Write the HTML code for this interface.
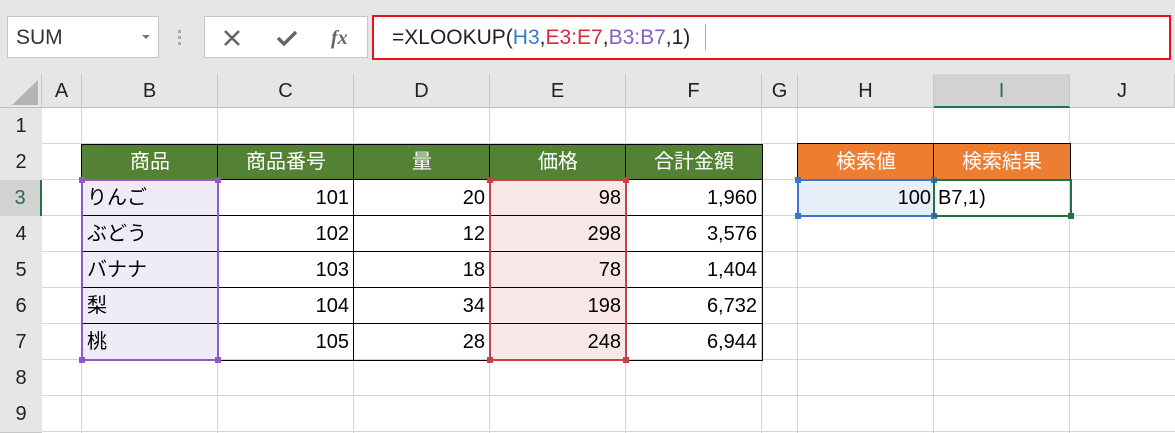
<!DOCTYPE html><html><head><meta charset="utf-8"><style>
*{margin:0;padding:0;box-sizing:border-box}
body{width:1175px;height:433px;background:#e6e6e6;position:relative;overflow:hidden;font-family:"Liberation Sans","Noto Sans CJK JP",sans-serif;color:#000}
.a{position:absolute}
.c{position:absolute;font-size:20px;line-height:36px;white-space:nowrap}
.r{text-align:right;padding-right:5px}
.l{padding-left:5px}
.ctr{text-align:center}
.vl{position:absolute;top:108px;height:325px;width:1px;background:#d4d4d4}
.hl{position:absolute;left:0;width:1175px;height:1px;background:#d4d4d4}
.hd{position:absolute;top:74px;height:34px;text-align:center;font-size:20px;line-height:34px;color:#222;border-right:1px solid #c8c8c8}
.rh{position:absolute;left:0;width:42px;text-align:center;font-size:20px;line-height:36px;color:#222;border-bottom:1px solid #c8c8c8;background:#e6e6e6}
.h{position:absolute;width:6px;height:6px}
</style></head><body>
<!-- formula bar -->
<div class="a" style="left:7px;top:16px;width:152px;height:42px;background:#fff;border:1px solid #c6c6c6"></div>
<div class="c" style="left:16px;top:20px;font-size:21px;color:#333">SUM</div>
<div class="a" style="left:142px;top:35px;border-left:4px solid transparent;border-right:4px solid transparent;border-top:4px solid #777"></div>
<div class="a" style="left:178px;top:30px;width:3px;height:3px;background:#aaa;box-shadow:0 6px #aaa,0 12px #aaa"></div>
<div class="a" style="left:204px;top:16px;width:164px;height:42px;background:#fff;border:1px solid #c6c6c6"></div>
<svg class="a" style="left:222px;top:28px" width="20" height="20"><path d="M3 3L17 17M17 3L3 17" stroke="#666" stroke-width="2.6"/></svg>
<svg class="a" style="left:275px;top:28px" width="24" height="20"><path d="M3 10L9 16L21 4" stroke="#666" stroke-width="3.4" fill="none"/></svg>
<div class="c" style="left:331px;top:20px;font-family:'Liberation Serif',serif;font-style:italic;font-weight:bold;color:#666;font-size:20px">fx</div>
<div class="a" style="left:372px;top:15px;width:799px;height:45px;background:#fff;border:2px solid #e8111a"></div>
<div class="c" style="left:392px;top:20px;font-size:21px;color:#222">=XLOOKUP(<span style="color:#3478d4">H3</span>,<span style="color:#d22b3c">E3:E7</span>,<span style="color:#8a5cc4">B3:B7</span>,1)</div>
<div class="a" style="left:705px;top:24px;width:1px;height:26px;background:#aaa"></div>
<!-- header row -->
<div class="a" style="left:0;top:74px;width:1175px;height:34px;background:#e6e6e6;border-bottom:1px solid #bdbdbd"></div>
<div class="a" style="left:0;top:74px;width:42px;height:34px;border-right:1px solid #c8c8c8"></div>
<svg class="a" style="left:10px;top:78px" width="30" height="28"><path d="M28 2L28 27L2 27Z" fill="#b4b4b4"/></svg>
<div class="hd" style="left:42px;width:40px">A</div>
<div class="hd" style="left:82px;width:136px">B</div>
<div class="hd" style="left:218px;width:136px">C</div>
<div class="hd" style="left:354px;width:136px">D</div>
<div class="hd" style="left:490px;width:136px">E</div>
<div class="hd" style="left:626px;width:136px">F</div>
<div class="hd" style="left:762px;width:36px">G</div>
<div class="hd" style="left:798px;width:136px">H</div>
<div class="hd" style="left:934px;width:136px;background:#d2d2d2;border-bottom:2px solid #217346;color:#217346">I</div>
<div class="hd" style="left:1070px;width:105px">J</div>
<!-- grid -->
<div class="a" style="left:42px;top:108px;width:1133px;height:325px;background:#fff"></div>
<div class="vl" style="left:81px"></div><div class="vl" style="left:217px"></div><div class="vl" style="left:353px"></div><div class="vl" style="left:489px"></div><div class="vl" style="left:625px"></div><div class="vl" style="left:761px"></div><div class="vl" style="left:797px"></div><div class="vl" style="left:933px"></div><div class="vl" style="left:1069px"></div>
<div class="hl" style="top:143px"></div><div class="hl" style="top:179px"></div><div class="hl" style="top:215px"></div><div class="hl" style="top:251px"></div><div class="hl" style="top:287px"></div><div class="hl" style="top:323px"></div><div class="hl" style="top:359px"></div><div class="hl" style="top:395px"></div><div class="hl" style="top:431px"></div>
<!-- row headers -->
<div class="a" style="left:0;top:108px;width:42px;height:325px;background:#e6e6e6;border-right:1px solid #bdbdbd"></div>
<div class="rh" style="top:108px">1</div><div class="rh" style="top:144px">2</div>
<div class="rh" style="top:180px;background:#d2d2d2;color:#217346;border-right:2px solid #217346">3</div>
<div class="rh" style="top:216px">4</div><div class="rh" style="top:252px">5</div><div class="rh" style="top:288px">6</div><div class="rh" style="top:324px">7</div><div class="rh" style="top:360px">8</div><div class="rh" style="top:396px">9</div>
<!-- fills -->
<div class="a" style="left:82px;top:144px;width:680px;height:36px;background:#548235"></div>
<div class="a" style="left:82px;top:180px;width:136px;height:180px;background:#efebf7"></div>
<div class="a" style="left:490px;top:180px;width:136px;height:180px;background:#f8e8e8"></div>
<div class="a" style="left:798px;top:144px;width:272px;height:36px;background:#ed7d31"></div>
<div class="a" style="left:798px;top:180px;width:136px;height:36px;background:#e6eef8"></div>
<!-- table borders -->
<div class="a" style="left:81px;top:144px;width:682px;height:217px;border:1px solid #000"></div>
<div class="a" style="left:81px;top:179px;width:682px;height:1px;background:#000"></div>
<div class="a" style="left:81px;top:215px;width:682px;height:1px;background:#000"></div>
<div class="a" style="left:81px;top:251px;width:682px;height:1px;background:#000"></div>
<div class="a" style="left:81px;top:287px;width:682px;height:1px;background:#000"></div>
<div class="a" style="left:81px;top:323px;width:682px;height:1px;background:#000"></div>
<div class="a" style="left:217px;top:144px;width:1px;height:217px;background:#000"></div>
<div class="a" style="left:353px;top:144px;width:1px;height:217px;background:#000"></div>
<div class="a" style="left:489px;top:144px;width:1px;height:217px;background:#000"></div>
<div class="a" style="left:625px;top:144px;width:1px;height:217px;background:#000"></div>
<div class="a" style="left:797px;top:143px;width:274px;height:38px;border:1px solid #000"></div>
<div class="a" style="left:933px;top:143px;width:1px;height:38px;background:#000"></div>
<!-- headers text -->
<div class="c ctr" style="left:82px;top:144px;width:136px;color:#fff">商品</div>
<div class="c ctr" style="left:218px;top:144px;width:136px;color:#fff">商品番号</div>
<div class="c ctr" style="left:354px;top:144px;width:136px;color:#fff">量</div>
<div class="c ctr" style="left:490px;top:144px;width:136px;color:#fff">価格</div>
<div class="c ctr" style="left:626px;top:144px;width:136px;color:#fff">合計金額</div>
<div class="c ctr" style="left:798px;top:144px;width:136px;color:#fff">検索値</div>
<div class="c ctr" style="left:934px;top:144px;width:136px;color:#fff">検索結果</div>
<!-- data -->
<div class="c l" style="left:82px;top:180px">りんご</div><div class="c r" style="left:218px;top:180px;width:136px">101</div><div class="c r" style="left:354px;top:180px;width:136px">20</div><div class="c r" style="left:490px;top:180px;width:136px">98</div><div class="c r" style="left:626px;top:180px;width:136px">1,960</div>
<div class="c l" style="left:82px;top:216px">ぶどう</div><div class="c r" style="left:218px;top:216px;width:136px">102</div><div class="c r" style="left:354px;top:216px;width:136px">12</div><div class="c r" style="left:490px;top:216px;width:136px">298</div><div class="c r" style="left:626px;top:216px;width:136px">3,576</div>
<div class="c l" style="left:82px;top:252px">バナナ</div><div class="c r" style="left:218px;top:252px;width:136px">103</div><div class="c r" style="left:354px;top:252px;width:136px">18</div><div class="c r" style="left:490px;top:252px;width:136px">78</div><div class="c r" style="left:626px;top:252px;width:136px">1,404</div>
<div class="c l" style="left:82px;top:288px">梨</div><div class="c r" style="left:218px;top:288px;width:136px">104</div><div class="c r" style="left:354px;top:288px;width:136px">34</div><div class="c r" style="left:490px;top:288px;width:136px">198</div><div class="c r" style="left:626px;top:288px;width:136px">6,732</div>
<div class="c l" style="left:82px;top:324px">桃</div><div class="c r" style="left:218px;top:324px;width:136px">105</div><div class="c r" style="left:354px;top:324px;width:136px">28</div><div class="c r" style="left:490px;top:324px;width:136px">248</div><div class="c r" style="left:626px;top:324px;width:136px">6,944</div>
<div class="c r" style="left:798px;top:180px;width:136px;padding-right:3px">100</div>
<div class="c" style="left:938px;top:180px">B7,1)</div>
<!-- range highlights -->
<div class="a" style="left:81px;top:179px;width:138px;height:182px;border:2px solid #8a5cc4"></div>
<div class="h" style="left:79px;top:177px;background:#8a5cc4"></div><div class="h" style="left:215px;top:177px;background:#8a5cc4"></div><div class="h" style="left:79px;top:357px;background:#8a5cc4"></div><div class="h" style="left:215px;top:357px;background:#8a5cc4"></div>
<div class="a" style="left:489px;top:179px;width:138px;height:182px;border:2px solid #c8404a"></div>
<div class="h" style="left:487px;top:177px;background:#c8404a"></div><div class="h" style="left:623px;top:177px;background:#c8404a"></div><div class="h" style="left:487px;top:357px;background:#c8404a"></div><div class="h" style="left:623px;top:357px;background:#c8404a"></div>
<div class="a" style="left:797px;top:179px;width:138px;height:38px;border:2px solid #3a76d0"></div>
<div class="h" style="left:795px;top:177px;background:#3a76d0"></div><div class="h" style="left:931px;top:177px;background:#3a76d0"></div><div class="h" style="left:795px;top:213px;background:#3a76d0"></div><div class="h" style="left:931px;top:213px;background:#3a76d0"></div>
<div class="a" style="left:933px;top:179px;width:139px;height:38px;border:2px solid #217346"></div>
<div class="h" style="left:1068px;top:213px;background:#217346"></div>
</body></html>
